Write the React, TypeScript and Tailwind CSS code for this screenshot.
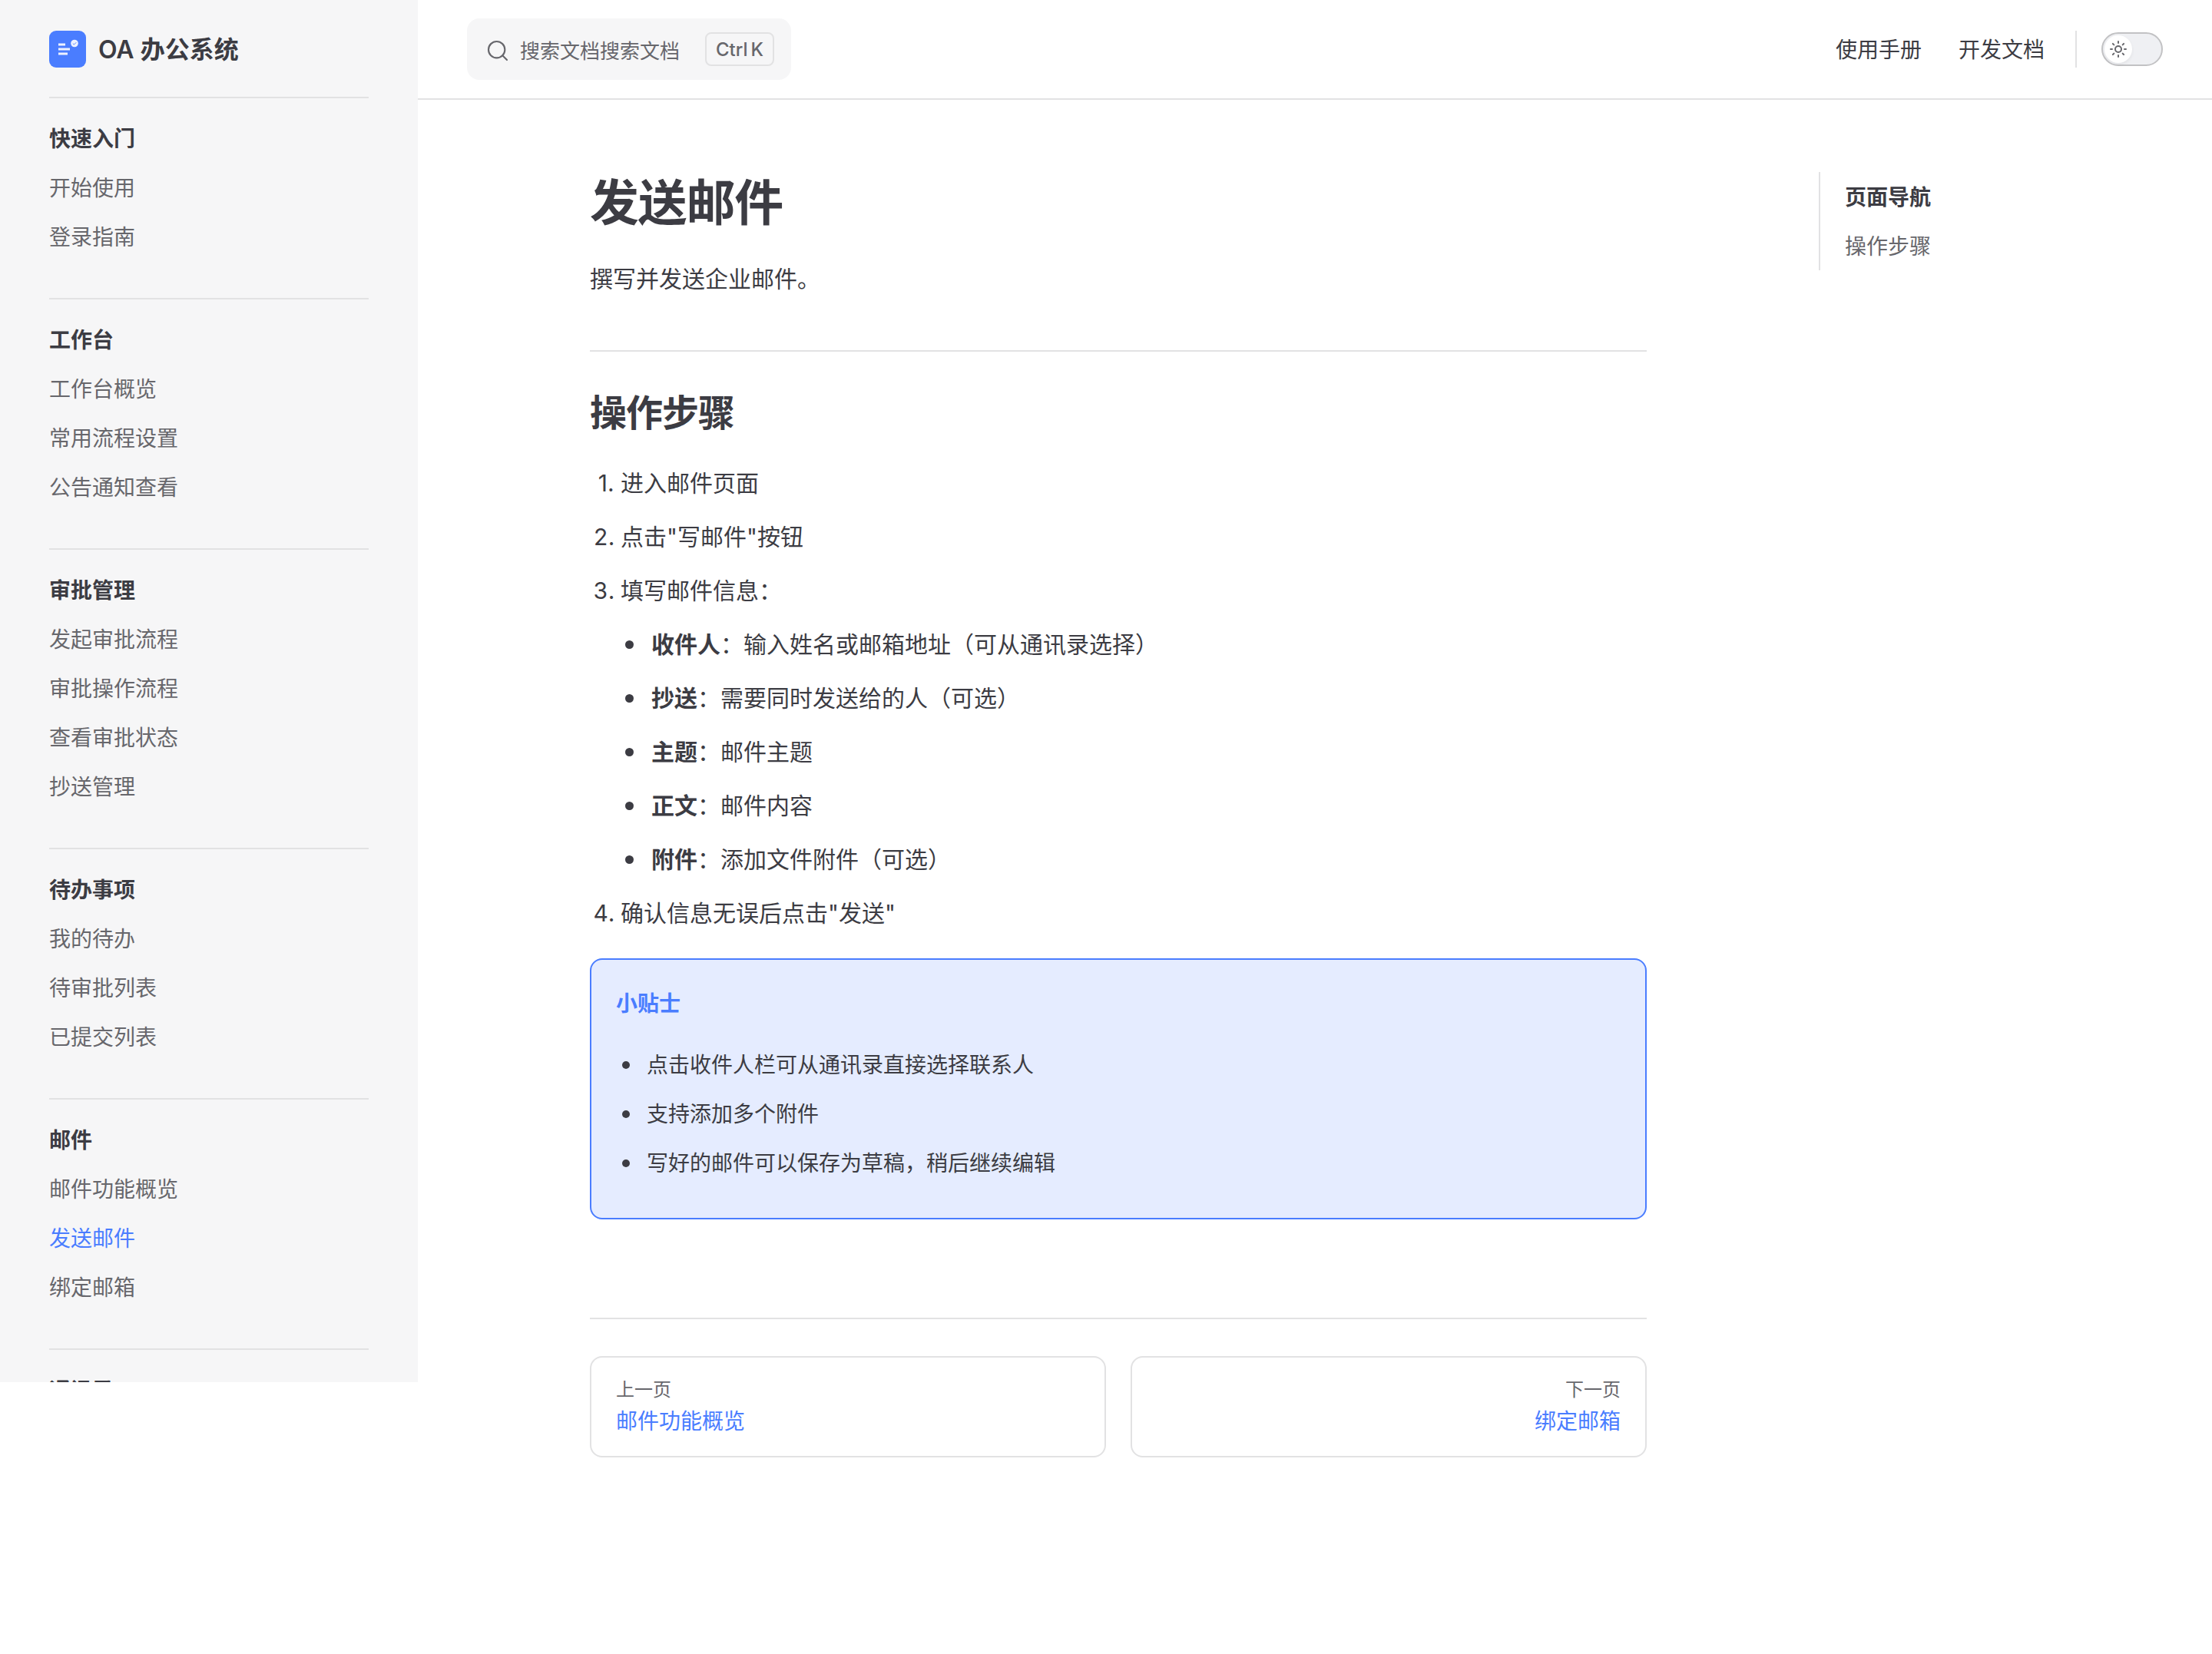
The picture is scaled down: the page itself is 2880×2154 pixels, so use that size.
import React from "react";

const FONT = "font-['Inter','Noto_Sans_CJK_SC',sans-serif]";

type Group = { title: string; items: string[] };

const groups: Group[] = [
  { title: "快速入门", items: ["开始使用", "登录指南"] },
  { title: "工作台", items: ["工作台概览", "常用流程设置", "公告通知查看"] },
  { title: "审批管理", items: ["发起审批流程", "审批操作流程", "查看审批状态", "抄送管理"] },
  { title: "待办事项", items: ["我的待办", "待审批列表", "已提交列表"] },
  { title: "邮件", items: ["邮件功能概览", "发送邮件", "绑定邮箱"] },
  { title: "通讯录", items: [] },
];

const fields = [
  ["收件人", "输入姓名或邮箱地址（可从通讯录选择）"],
  ["抄送", "需要同时发送给的人（可选）"],
  ["主题", "邮件主题"],
  ["正文", "邮件内容"],
  ["附件", "添加文件附件（可选）"],
];

const tips = ["点击收件人栏可从通讯录直接选择联系人", "支持添加多个附件", "写好的邮件可以保存为草稿，稍后继续编辑"];

function Logo() {
  return (
    <svg className="h-12 w-12 shrink-0" viewBox="0 0 48 48">
      <rect width="48" height="48" rx="9" fill="#4a7dff" />
      <g fill="#fff" fillOpacity="0.9">
        <rect x="12" y="16.5" width="9" height="3" />
        <rect x="12" y="22.5" width="15" height="3" />
        <rect x="12" y="28.5" width="12" height="3" />
        <circle cx="33" cy="16.5" r="4.8" />
      </g>
      <path d="M30.8 16.6l1.6 1.5 2.9-2.9" fill="none" stroke="#4a7dff" strokeWidth="0.9" />
    </svg>
  );
}

function Sidebar() {
  return (
    <aside className="h-[1800px] w-[544px] shrink-0 overflow-hidden bg-[#f6f6f7] px-16">
      <div className="flex h-32 w-[416px] items-center gap-4 border-b-2 border-[#e2e2e3] pt-0.5 text-[32px] font-semibold">
        <Logo />
        <span className="pt-px">OA 办公系统</span>
      </div>
      {groups.map((g, i) => (
        <section
          key={g.title}
          className={i ? "w-[416px] border-t-2 border-[#e2e2e3] pt-5 pb-12" : "w-[416px] pt-5 pb-12"}
        >
          <h2 className="pt-[9px] pb-[7px] text-[28px] leading-[48px] font-bold">{g.title}</h2>
          {g.items.map((t) => (
            <p
              key={t}
              className={
                t === "发送邮件"
                  ? "pt-[9px] pb-[7px] text-[28px] leading-[48px] text-[#4a7dff]"
                  : "pt-[9px] pb-[7px] text-[28px] leading-[48px] text-[#67676c]"
              }
            >
              {t}
            </p>
          ))}
        </section>
      ))}
    </aside>
  );
}

function TopBar() {
  return (
    <header className="flex h-[130px] items-center border-b-2 border-[#e2e2e3] px-16">
      <button className="flex h-20 w-[422px] items-center rounded-2xl bg-[#f6f6f7] pr-[22px] pl-6 text-[#67676c]">
        <svg
          className="mt-1 h-8 w-8"
          viewBox="0 0 24 24"
          fill="none"
          stroke="currentColor"
          strokeWidth="1.6"
          strokeLinecap="round"
        >
          <circle cx="11" cy="11" r="8" />
          <path d="m21 21-4.3-4.3" />
        </svg>
        <span className="mt-1.5 ml-[13px] text-[26px] leading-[52px]">搜索文档搜索文档</span>
        <span className="ml-auto flex h-11 w-[90px] items-center justify-center gap-1 rounded-lg border-2 border-[#e2e2e3] pt-0.5 text-2xl font-medium">
          <span>Ctrl</span>
          <span>K</span>
        </span>
      </button>
      <nav className="ml-auto flex items-center text-[28px]">
        <span className="pt-0.5">使用手册</span>
        <span className="ml-12 pt-0.5">开发文档</span>
        <span className="ml-10 h-12 w-0.5 bg-[#e2e2e3]" />
        <span className="ml-8 flex h-11 w-20 items-center rounded-full border-2 border-[#c2c2c4] bg-[#eff0f3] pl-0.5">
          <span className="flex h-9 w-9 items-center justify-center rounded-full bg-white text-[#67676c] shadow-[0_2px_4px_rgba(0,0,0,0.06)]">
            <svg
              className="h-6 w-6"
              viewBox="0 0 24 24"
              fill="none"
              stroke="currentColor"
              strokeWidth="2"
              strokeLinecap="round"
            >
              <circle cx="12" cy="12" r="4" />
              <path d="M12 2v2M12 20v2M4.93 4.93l1.41 1.41M17.66 17.66l1.41 1.41M2 12h2M20 12h2M6.34 17.66l-1.41 1.41M19.07 4.93l-1.41 1.41" />
            </svg>
          </span>
        </span>
      </nav>
    </header>
  );
}

function Article() {
  return (
    <article className="w-[1376px]">
      <h1 className="text-[64px] leading-[80px] font-semibold tracking-[-0.02em]">发送邮件</h1>
      <p className="mt-8 text-[30px] leading-[54px]">撰写并发送企业邮件。</p>
      <h2 className="mt-[66px] border-t-2 border-[#e2e2e3] pt-12 text-[48px] leading-[64px] font-semibold tracking-[-0.02em]">
        操作步骤
      </h2>
      <ol className="mt-8 list-decimal space-y-4 pl-10 text-[30px] leading-[54px]">
        <li className="marker:[font-variant-numeric:normal]">进入邮件页面</li>
        <li>点击"写邮件"按钮</li>
        <li>
          填写邮件信息：
          <ul className="mt-4 space-y-4 pl-10">
            {fields.map(([k, v]) => (
              <li
                key={k}
                className="flex items-center before:mr-[23px] before:-ml-[34px] before:size-[11px] before:rounded-full before:bg-[#3c3c43]"
              >
                <span>
                  <strong className="font-semibold">{k}</strong>：{v}
                </span>
              </li>
            ))}
          </ul>
        </li>
        <li>确认信息无误后点击"发送"</li>
      </ol>
      <div className="mt-8 rounded-2xl border-2 border-[#4a7dff] bg-[#e5ecff] px-8 pt-[33px] pb-[47px] text-[28px] leading-[48px]">
        <p className="font-semibold text-[#4a7dff]">小贴士</p>
        <ul className="mt-8 space-y-4 pl-10">
          {tips.map((t) => (
            <li
              key={t}
              className="flex items-center before:mr-[22px] before:-ml-8 before:size-2.5 before:rounded-full before:bg-[#3c3c43]"
            >
              {t}
            </li>
          ))}
        </ul>
      </div>
      <div className="mt-32 grid grid-cols-2 gap-8 border-t-2 border-[#e2e2e3] pt-12">
        <a className="flex h-[132px] flex-col rounded-2xl border-2 border-[#e2e2e3] px-8 pt-[22px] leading-10">
          <span className="text-2xl leading-10 text-[#67676c]">上一页</span>
          <span className="pt-px text-[28px] leading-10 text-[#4a7dff]">邮件功能概览</span>
        </a>
        <a className="flex h-[132px] flex-col rounded-2xl border-2 border-[#e2e2e3] px-8 pt-[22px] text-right leading-10">
          <span className="text-2xl leading-10 text-[#67676c]">下一页</span>
          <span className="pt-px text-[28px] leading-10 text-[#4a7dff]">绑定邮箱</span>
        </a>
      </div>
    </article>
  );
}

export default function App() {
  return (
    <div className={`${FONT} flex h-[2154px] w-[2880px] overflow-hidden bg-white text-[#3c3c43]`}>
      <Sidebar />
      <div className="flex-1">
        <TopBar />
        <main className="flex items-start pt-[94px] pl-56">
          <Article />
          <aside className="ml-56 h-32 border-l-2 border-[#e2e2e3] pt-px pl-8 text-[28px] leading-[64px]">
            <p className="font-semibold">页面导航</p>
            <p className="text-[#67676c]">操作步骤</p>
          </aside>
        </main>
      </div>
    </div>
  );
}
